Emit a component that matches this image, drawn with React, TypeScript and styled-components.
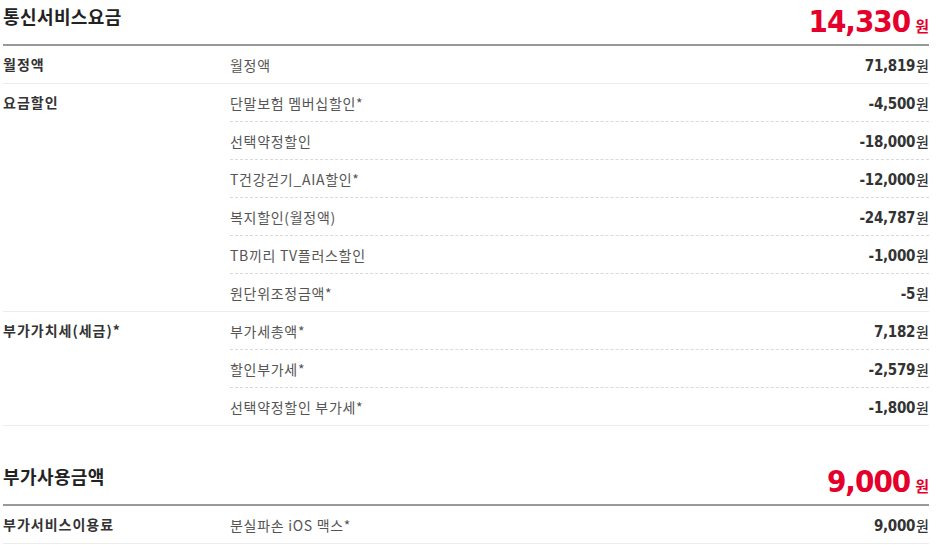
import styled, { createGlobalStyle } from 'styled-components'

const GlobalStyle = createGlobalStyle`
  html, body {
    margin: 0;
    padding: 0;
    background: #fff;
  }
  body {
    font-family: "Noto Sans CJK KR", "Noto Sans", sans-serif;
    color: #333;
  }
`

const NUM_FONT = `"DejaVu Sans Condensed", "DejaVu Sans", sans-serif`

const Page = styled.div`
  width: 926px;
  margin-left: 3px;
`

const Section = styled.section`
  & + & {
    margin-top: 34px;
  }
`

const Header = styled.div`
  display: flex;
  justify-content: space-between;
  align-items: flex-start;
  height: 44px;
  border-bottom: 2px solid #999;
`

const Title = styled.h2`
  margin: 4px 0 0;
  font-size: 18px;
  line-height: 24px;
  font-weight: 700;
  color: #222;
  letter-spacing: 0.4px;
`

const Total = styled.div`
  display: flex;
  align-items: baseline;
  margin-top: 4px;
  color: #e4002b;
`

const TotalNum = styled.span`
  font-family: ${NUM_FONT};
  font-size: 31px;
  line-height: 34px;
  font-weight: 700;
  letter-spacing: -1px;
`

const TotalWon = styled.span`
  margin-left: 5px;
  font-size: 15px;
  font-weight: 700;
`

const Group = styled.div`
  display: grid;
  grid-template-columns: 227px 1fr;
  border-bottom: 1px solid #ececec;
`

const Category = styled.div`
  font-size: 14px;
  line-height: 37px;
  font-weight: 700;
  color: #333;
  letter-spacing: 1px;
`

const Items = styled.div`
  display: flex;
  flex-direction: column;
`

const Item = styled.div`
  display: flex;
  justify-content: space-between;
  align-items: center;
  height: 37px;
  & + & {
    border-top: 1px dashed #d9d9d9;
  }
`

const ItemLabel = styled.span`
  font-size: 14px;
  color: #555;
  letter-spacing: 0.7px;
`

const Amount = styled.span`
  display: flex;
  align-items: baseline;
  color: #333;
`

const AmountNum = styled.span`
  font-family: ${NUM_FONT};
  font-size: 15px;
  font-weight: 700;
  letter-spacing: -0.3px;
`

const AmountWon = styled.span`
  margin-left: 1px;
  font-size: 14px;
  font-weight: 500;
`

type Row = { label: string; amount: string }
type Cat = { name: string; rows: Row[] }
type Block = { title: string; total: string; cats: Cat[] }

const blocks: Block[] = [
  {
    title: '통신서비스요금',
    total: '14,330',
    cats: [
      { name: '월정액', rows: [{ label: '월정액', amount: '71,819' }] },
      {
        name: '요금할인',
        rows: [
          { label: '단말보험 멤버십할인*', amount: '-4,500' },
          { label: '선택약정할인', amount: '-18,000' },
          { label: 'T건강걷기_AIA할인*', amount: '-12,000' },
          { label: '복지할인(월정액)', amount: '-24,787' },
          { label: 'TB끼리 TV플러스할인', amount: '-1,000' },
          { label: '원단위조정금액*', amount: '-5' },
        ],
      },
      {
        name: '부가가치세(세금)*',
        rows: [
          { label: '부가세총액*', amount: '7,182' },
          { label: '할인부가세*', amount: '-2,579' },
          { label: '선택약정할인 부가세*', amount: '-1,800' },
        ],
      },
    ],
  },
  {
    title: '부가사용금액',
    total: '9,000',
    cats: [
      {
        name: '부가서비스이용료',
        rows: [{ label: '분실파손 iOS 맥스*', amount: '9,000' }],
      },
    ],
  },
]

const App = () => (
  <Page>
    <GlobalStyle />
    {blocks.map((b) => (
      <Section key={b.title}>
        <Header>
          <Title>{b.title}</Title>
          <Total>
            <TotalNum>{b.total}</TotalNum>
            <TotalWon>원</TotalWon>
          </Total>
        </Header>
        {b.cats.map((c) => (
          <Group key={c.name}>
            <Category>{c.name}</Category>
            <Items>
              {c.rows.map((r) => (
                <Item key={r.label}>
                  <ItemLabel>{r.label}</ItemLabel>
                  <Amount>
                    <AmountNum>{r.amount}</AmountNum>
                    <AmountWon>원</AmountWon>
                  </Amount>
                </Item>
              ))}
            </Items>
          </Group>
        ))}
      </Section>
    ))}
  </Page>
)

export default App
